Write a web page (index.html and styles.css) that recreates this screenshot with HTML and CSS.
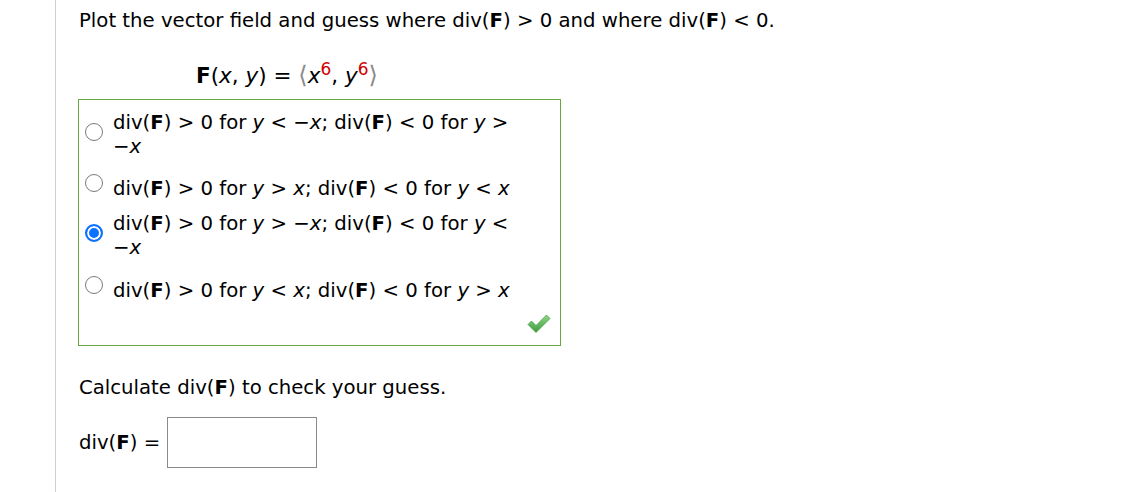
FILE: index.html
```html
<!DOCTYPE html>
<html>
<head>
<meta charset="utf-8">
<link rel="stylesheet" href="styles.css">
</head>
<body>
<div class="content">
  <p class="question">Plot the vector field and guess where div(<b>F</b>) &gt; 0 and where div(<b>F</b>) &lt; 0.</p>
  <p class="formula"><b>F</b>(<i>x</i>, <i>y</i>) = <span class="br">⟨</span><i>x</i><sup>6</sup>, <i>y</i><sup>6</sup><span class="br">⟩</span></p>
  <div class="choices">
    <div class="opt opt-wrap opt-1">
      <span class="radio"></span>
      <span class="txt">div(<b>F</b>) &gt; 0 for <i>y</i> &lt; −<i>x</i>; div(<b>F</b>) &lt; 0 for <i>y</i> &gt; −<i>x</i></span>
    </div>
    <div class="opt opt-single opt-2">
      <span class="radio"></span>
      <span class="txt">div(<b>F</b>) &gt; 0 for <i>y</i> &gt; <i>x</i>; div(<b>F</b>) &lt; 0 for <i>y</i> &lt; <i>x</i></span>
    </div>
    <div class="opt opt-wrap opt-3">
      <span class="radio checked"></span>
      <span class="txt">div(<b>F</b>) &gt; 0 for <i>y</i> &gt; −<i>x</i>; div(<b>F</b>) &lt; 0 for <i>y</i> &lt; −<i>x</i></span>
    </div>
    <div class="opt opt-single opt-4">
      <span class="radio"></span>
      <span class="txt">div(<b>F</b>) &gt; 0 for <i>y</i> &lt; <i>x</i>; div(<b>F</b>) &lt; 0 for <i>y</i> &gt; <i>x</i></span>
    </div>
    <div class="mark">
      <svg width="26" height="22" viewBox="0 0 26 22">
        <defs>
          <linearGradient id="g" x1="0" y1="0" x2="0" y2="1">
            <stop offset="0" stop-color="#8fd88a"/>
            <stop offset="1" stop-color="#3f9a3c"/>
          </linearGradient>
        </defs>
        <path d="M2 11.5 L5.5 8 L10 12.5 L20.5 2 L24 5.5 L10 19.5 Z" fill="url(#g)" stroke="#4a9e45" stroke-width="0.8" stroke-linejoin="round"/>
      </svg>
    </div>
  </div>
  <p class="calc">Calculate div(<b>F</b>) to check your guess.</p>
  <div class="answer">
    <span class="label">div(<b>F</b>) =</span>
    <span class="input"></span>
  </div>
</div>
</body>
</html>
```
FILE: styles.css
```css
html, body {
  margin: 0;
  padding: 0;
  background: #fff;
}
body {
  font-family: "DejaVu Sans", Verdana, sans-serif;
  font-size: 19.7px;
  line-height: 24px;
  color: #000;
}
.content {
  margin-left: 55px;
  border-left: 1px solid #cfcfcf;
  padding: 9px 0 0 23px;
  min-height: 483px;
}
p {
  margin: 0;
}
b {
  font-weight: bold;
}
i {
  font-style: italic;
}
.formula {
  margin-top: 30px;
  padding-left: 117px;
  font-size: 21.5px;
}
.formula sup {
  color: #d00000;
  font-size: 17px;
  line-height: 0;
  vertical-align: 8px;
}
.formula .br {
  color: #8a8a8a;
  font-size: 24px;
}
.choices {
  margin-top: 11px;
  margin-left: -1px;
  width: 481px;
  border: 1px solid #6aa83f;
  padding: 11px 0 11px 0;
  display: flex;
  flex-direction: column;
}
.opt {
  display: flex;
  align-items: flex-start;
  padding-left: 6px;
}
.opt-2 { margin-top: 18px; }
.opt-3 { margin-top: 11px; }
.opt-4 { margin-top: 19px; }
.radio {
  flex: none;
  width: 18px;
  height: 18px;
  box-sizing: border-box;
  border: 1px solid #7a7a7a;
  border-radius: 50%;
  background: #fff;
}
.opt-wrap .radio { margin-top: 12px; }
.opt-single .radio { margin-top: -3px; }
.radio.checked {
  border: 2px solid #0a72ff;
  background: #0a72ff;
  box-shadow: inset 0 0 0 2px #fff;
}
.txt {
  margin-left: 10px;
  width: 420px;
}
.mark {
  align-self: flex-end;
  margin: 11px 8px 0 0;
  height: 20px;
}
.mark svg {
  display: block;
  margin-top: -1px;
}
.calc {
  margin-top: 30px;
}
.answer {
  margin-top: 17px;
  display: flex;
  align-items: center;
}
.label {
  margin-right: 7px;
}
.input {
  width: 150px;
  height: 51px;
  box-sizing: border-box;
  border: 1px solid #8a8a8a;
  background: #fff;
}
```
